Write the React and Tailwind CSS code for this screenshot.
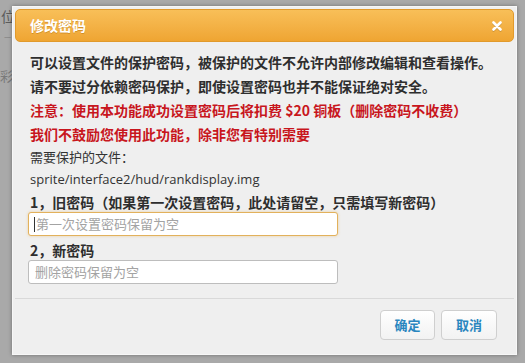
import React from 'react';

const cjk = { fontFamily: '"Noto Sans CJK SC", "Noto Sans", sans-serif' };

const CloseIcon = () => (
  <svg width="10" height="10" viewBox="0 0 10 10" className="drop-shadow-[0_1px_0_rgba(0,0,0,0.15)]">
    <path d="M1.5 1.5 L8.5 8.5 M8.5 1.5 L1.5 8.5" stroke="#ffffff" strokeWidth="2.6" strokeLinecap="round" />
  </svg>
);

const App = () => {
  return (
    <div
      className="relative w-[525px] h-[363px] overflow-hidden bg-[#a9a9a9] pl-[12px] pt-[6px]"
      style={cjk}
    >
      {/* page behind the modal */}
      <span className="absolute left-[1px] top-[9px] text-[14px] leading-none text-[#5c5c5c]">位</span>
      <span className="absolute left-[4px] top-[33px] text-[8px] leading-none text-[#777]">—</span>
      <span className="absolute left-[0px] top-[69px] text-[13px] leading-none text-[#7a7a7a]">彩</span>

      {/* modal */}
      <div className="relative w-[505px] h-[349px] bg-[#efefef] border border-[#f7f7f7] p-[2px] shadow-[0_0_4px_rgba(0,0,0,0.35)] flex flex-col">
        <div className="h-[33px] shrink-0 rounded-[5px] border border-[#e19a2c] bg-gradient-to-b from-[#f8bf58] to-[#efa532] flex items-center justify-between pl-[14px] pr-[11px]">
          <span className="text-[14px] font-bold text-white [text-shadow:0_1px_0_rgba(150,90,0,0.35)]">修改密码</span>
          <CloseIcon />
        </div>

        <div className="flex flex-col pl-[15px] pt-[8px] text-[#2e2e2e]">
          <p className="text-[14px] leading-[24px] font-bold whitespace-nowrap">
            可以设置文件的保护密码，被保护的文件不允许内部修改编辑和查看操作。
          </p>
          <p className="text-[14px] leading-[24px] font-bold whitespace-nowrap">
            请不要过分依赖密码保护，即使设置密码也并不能保证绝对安全。
          </p>
          <p className="text-[14px] leading-[24px] font-bold whitespace-nowrap text-[#c8161d]">
            注意：使用本功能成功设置密码后将扣费 $20 铜板（删除密码不收费）
          </p>
          <p className="text-[14px] leading-[24px] font-bold whitespace-nowrap text-[#c8161d]">
            我们不鼓励您使用此功能，除非您有特别需要
          </p>
          <p className="text-[13px] leading-[22px] text-[#333]">需要保护的文件：</p>
          <p className="text-[13px] leading-[22px] text-[#333] [font-family:'Open_Sans','Noto_Sans',sans-serif]">
            sprite/interface2/hud/rankdisplay.img
          </p>

          <label className="mt-[2px] text-[14px] leading-[20px] font-bold whitespace-nowrap">
            1，旧密码（如果第一次设置密码，此处请留空，只需填写新密码）
          </label>
          <div className="-ml-[2px] w-[310px] h-[24px] rounded-[3px] border border-[#e2b15c] bg-white shadow-[0_0_3px_rgba(230,170,70,0.45)] flex items-center pl-[5px]">
            <span className="w-px h-[15px] bg-[#333] mr-[1px]" />
            <span className="text-[13px] text-[#a3a3a3]">第一次设置密码保留为空</span>
          </div>

          <label className="mt-[4px] text-[14px] leading-[20px] font-bold">2，新密码</label>
          <div className="-ml-[2px] w-[310px] h-[24px] rounded-[3px] border border-[#bdbdbd] bg-white flex items-center pl-[6px]">
            <span className="text-[13px] text-[#a3a3a3]">删除密码保留为空</span>
          </div>
        </div>

        <div className="mt-[14px] border-t border-[#d9d9d9] flex justify-end gap-[6px] pt-[11px] pr-[17px]">
          <button className="w-[55px] h-[30px] rounded-[4px] border border-[#cfcfcf] bg-gradient-to-b from-white to-[#f2f2f2] text-[13px] font-bold text-[#2a86bf]">
            确定
          </button>
          <button className="w-[56px] h-[30px] rounded-[4px] border border-[#cfcfcf] bg-gradient-to-b from-white to-[#f2f2f2] text-[13px] font-bold text-[#2a86bf]">
            取消
          </button>
        </div>
      </div>
    </div>
  );
};

export default App;
